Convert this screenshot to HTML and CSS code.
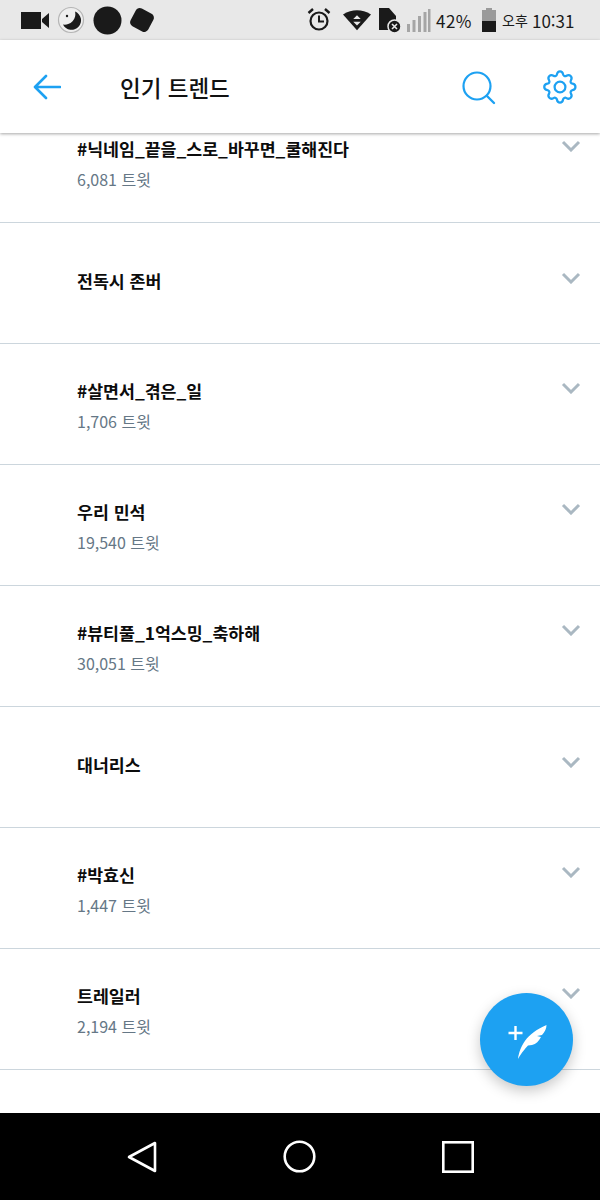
FILE: index.html
```html
<!DOCTYPE html>
<html lang="ko">
<head>
<meta charset="utf-8">
<title>인기 트렌드</title>
<link rel="stylesheet" href="styles.css">
</head>
<body>
<div class="phone">
  <div class="status">
    <div class="status-left">
      <svg class="ic" width="30" height="20" viewBox="0 0 30 20"><path class="dark" d="M1 2h20v17H1z M22 9l7-6v15l-7-6z"/></svg>
      <svg class="ic" width="28" height="28" viewBox="0 0 28 28"><circle cx="14" cy="14" r="12.500" fill="#eee" stroke="#b5b5b5" stroke-width="1.200"/><path class="dark" d="M18 5.500A9.500 9.500 0 1 1 6 18.500 10.500 10.500 0 0 0 18 5.500z"/><circle class="dark" cx="10" cy="10" r="1.200"/></svg>
      <svg class="ic" width="29" height="29" viewBox="0 0 29 29"><circle class="dark" cx="14.500" cy="14.500" r="14"/></svg>
      <svg class="ic" width="30" height="30" viewBox="0 0 30 30"><rect class="dark" x="5" y="5" width="20" height="20" rx="4.500" transform="rotate(28 15 15)"/></svg>
    </div>
    <div class="status-right">
      <svg class="ic alarm" width="24" height="26" viewBox="0 0 24 26"><circle cx="12" cy="14" r="8.500" fill="none" stroke="#1a1a1a" stroke-width="2.200"/><path d="M12 8.500V14.500H17" fill="none" stroke="#1a1a1a" stroke-width="2"/><path d="M1.500 6L6 2M22.500 6L18 2" stroke="#1a1a1a" stroke-width="2.400"/></svg>
      <svg class="ic wifi" width="28" height="24" viewBox="0 0 30 24"><path class="dark" d="M0 6Q15-3 30 6L15 23z"/><path d="M15 7l4 4h-8zM15 18l-4-4h8z" fill="#e8e8e8"/></svg>
      <svg class="ic sim" width="22" height="26" viewBox="0 0 22 26"><path class="dark" d="M0 1h10l7 8v14H0z"/><circle cx="15.500" cy="19.500" r="6.500" class="dark" stroke="#e8e8e8" stroke-width="1.500"/><path d="M13 17l5 5M18 17l-5 5" stroke="#e8e8e8" stroke-width="1.600"/></svg>
      <svg class="ic signal" width="25" height="25" viewBox="0 0 25 25"><path d="M1 16h3v8H1zM6.500 12h3v12h-3zM12 8h3v16h-3zM17.500 4h3v20h-3zM22 1h2.500v23H22z" fill="#a5a5a5"/></svg>
      <span class="pct">42%</span>
      <svg class="ic batt" width="16" height="25" viewBox="0 0 16 25"><path d="M5 0h6v2h4v11H1V2h4z" fill="#9a9a9a"/><path class="dark" d="M1 13h14v11H1z"/></svg>
      <span class="ampm">오후</span>
      <span class="clock">10:31</span>
    </div>
  </div>

  <header class="bar">
    <svg class="back" width="28" height="26" viewBox="0 0 28 26"><path d="M27 13H3M13 2L2 13l11 11" fill="none" stroke="#1da1f2" stroke-width="2.600" stroke-linejoin="round" stroke-linecap="round"/></svg>
    <h1 class="bar-title">인기 트렌드</h1>
    <svg class="search" width="34" height="34" viewBox="0 0 34 34"><circle cx="15" cy="15" r="13.500" fill="none" stroke="#1da1f2" stroke-width="2.200"/><path d="M25 25l7 7" stroke="#1da1f2" stroke-width="2.400" stroke-linecap="round"/></svg>
    <svg class="gear" width="36" height="36" viewBox="0 0 24 24"><path d="M12 1.500c1.300 0 1.800.8 2 1.900.2 1.200 1.300 1.700 2.300 1.100 1-.6 1.900-.7 2.800.2.900.9.800 1.800.2 2.800-.6 1-.1 2.100 1.100 2.300 1.100.2 1.900.8 1.900 2.200s-.8 1.900-1.900 2.100c-1.200.2-1.700 1.300-1.100 2.300.6 1 .7 1.900-.2 2.800-.9.900-1.800.8-2.800.2-1-.6-2.100-.1-2.300 1.100-.2 1.100-.7 1.900-2 1.900s-1.800-.8-2-1.900c-.2-1.200-1.300-1.700-2.300-1.100-1 .6-1.900.7-2.800-.2-.9-.9-.8-1.800-.2-2.800.6-1 .1-2.100-1.100-2.300C2.500 13.900 1.500 13.400 1.500 12s1-2 2.100-2.200c1.200-.2 1.700-1.300 1.100-2.300-.6-1-.7-1.900.2-2.800.9-.9 1.800-.8 2.800-.2 1 .6 2.100.1 2.300-1.100.2-1.100.7-1.900 2-1.900z" fill="none" stroke="#1da1f2" stroke-width="1.500"/><circle cx="12" cy="12" r="3.600" fill="none" stroke="#1da1f2" stroke-width="1.500"/></svg>
  </header>

  <main class="content">
    <ul class="trends">
      <li class="trend">
        <div class="trend-head"><span class="trend-name">#닉네임_끝을_스로_바꾸면_쿨해진다</span><svg class="chev" width="20" height="12" viewBox="0 0 20 12"><path d="M2 2l8 8 8-8"/></svg></div>
        <div class="trend-count">6,081 트윗</div>
      </li>
      <li class="trend">
        <div class="trend-head"><span class="trend-name">전독시 존버</span><svg class="chev" width="20" height="12" viewBox="0 0 20 12"><path d="M2 2l8 8 8-8"/></svg></div>
      </li>
      <li class="trend">
        <div class="trend-head"><span class="trend-name">#살면서_겪은_일</span><svg class="chev" width="20" height="12" viewBox="0 0 20 12"><path d="M2 2l8 8 8-8"/></svg></div>
        <div class="trend-count">1,706 트윗</div>
      </li>
      <li class="trend">
        <div class="trend-head"><span class="trend-name">우리 민석</span><svg class="chev" width="20" height="12" viewBox="0 0 20 12"><path d="M2 2l8 8 8-8"/></svg></div>
        <div class="trend-count">19,540 트윗</div>
      </li>
      <li class="trend">
        <div class="trend-head"><span class="trend-name">#뷰티풀_1억스밍_축하해</span><svg class="chev" width="20" height="12" viewBox="0 0 20 12"><path d="M2 2l8 8 8-8"/></svg></div>
        <div class="trend-count">30,051 트윗</div>
      </li>
      <li class="trend">
        <div class="trend-head"><span class="trend-name">대너리스</span><svg class="chev" width="20" height="12" viewBox="0 0 20 12"><path d="M2 2l8 8 8-8"/></svg></div>
      </li>
      <li class="trend">
        <div class="trend-head"><span class="trend-name">#박효신</span><svg class="chev" width="20" height="12" viewBox="0 0 20 12"><path d="M2 2l8 8 8-8"/></svg></div>
        <div class="trend-count">1,447 트윗</div>
      </li>
      <li class="trend">
        <div class="trend-head"><span class="trend-name">트레일러</span><svg class="chev" width="20" height="12" viewBox="0 0 20 12"><path d="M2 2l8 8 8-8"/></svg></div>
        <div class="trend-count">2,194 트윗</div>
      </li>
    </ul>
    <button class="fab" type="button" aria-label="새 트윗">
      <svg width="52" height="52" viewBox="0 0 52 52"><path d="M14.500 12v14M7.500 19h14" stroke="#fff" stroke-width="2.400"/><path d="M17 45C19 32 25 20 45.500 11c0 3-1.500 7-4.500 10l-5 1 4 1c-2 4-5 7-9 8l-4 .5c-3 3.500-6 6.500-10 13.500z" fill="#fff"/></svg>
    </button>
  </main>

  <nav class="nav">
    <svg width="30" height="32" viewBox="0 0 30 32"><path d="M28 2v28L2 16z" fill="none" stroke="#fff" stroke-width="2.600" stroke-linejoin="round"/></svg>
    <svg width="33" height="33" viewBox="0 0 33 33"><circle cx="16.500" cy="16.500" r="14.800" fill="none" stroke="#fff" stroke-width="2.600"/></svg>
    <svg width="32" height="32" viewBox="0 0 32 32"><rect x="1.300" y="1.300" width="29.400" height="29.400" fill="none" stroke="#fff" stroke-width="2.600"/></svg>
  </nav>
</div>
</body>
</html>
```
FILE: styles.css
```css
* { box-sizing: border-box; }

html, body { margin: 0; padding: 0; }

body {
  font-family: "Noto Sans CJK KR", "Noto Sans", sans-serif;
  background: #fff;
}

.phone {
  width: 600px;
  height: 1200px;
  display: flex;
  flex-direction: column;
  overflow: hidden;
}

.dark { fill: #1a1a1a; }
.ic { display: block; flex: none; }

/* system status bar */
.status {
  height: 40px;
  flex: none;
  background: #e8e8e8;
  display: flex;
  align-items: center;
  justify-content: space-between;
  padding: 0 25px 0 20px;
  color: #1a1a1a;
}

.status-left { display: flex; align-items: center; gap: 8px; }
.status-left .ic:first-child { margin-right: -1px; }
.status-left .ic:last-child { margin-left: -3px; }

.status-right { display: flex; align-items: center; }
.alarm { margin-right: 12px; }
.wifi { margin-right: 8px; }
.sim { margin-right: 5px; }
.signal { margin-right: 5px; }
.pct { font-size: 17px; letter-spacing: .5px; margin-right: 8px; width: 37px; white-space: nowrap; }
.batt { margin-right: 5px; }
.ampm { font-size: 14px; width: 25px; margin-right: 5px; white-space: nowrap; }
.clock { font-size: 17px; width: 43px; white-space: nowrap; }

/* app bar */
.bar {
  height: 93px;
  flex: none;
  background: #fff;
  display: flex;
  align-items: center;
  padding: 0 22px 0 33px;
  box-shadow: 0 1px 3px rgba(0, 0, 0, .35);
  position: relative;
  z-index: 2;
}

.back { margin-right: 59px; }

.bar-title {
  margin: 0 auto 0 0;
  font-size: 22.500px;
  font-weight: 500;
  color: #111;
}

.search { margin-right: 46px; margin-top: 2px; }

/* trend list, scrolled so that the first row sits partly under the bar */
.content {
  flex: 1;
  min-height: 0;
  background: #fff;
  position: relative;
  overflow: hidden;
}

.trends {
  list-style: none;
  margin: -31px 0 0;
  padding: 0;
}

.trend {
  height: 121px;
  border-bottom: 1px solid #ccd6dd;
  padding: 0 19px 4px 77px;
  display: flex;
  flex-direction: column;
  justify-content: center;
}

.trend-head {
  display: flex;
  justify-content: space-between;
  align-items: center;
}

.trend-name {
  font-size: 17.300px;
  font-weight: 700;
  line-height: 30px;
  color: #0c0c0c;
  white-space: nowrap;
}

.chev { margin-top: -7px; }
.chev path {
  fill: none;
  stroke: #aab8c2;
  stroke-width: 3;
}

.trend-count {
  font-size: 16px;
  line-height: 30px;
  color: #657786;
  margin-bottom: -8px;
}

.fab {
  position: absolute;
  left: 480px;
  top: 860px;
  width: 93px;
  height: 93px;
  border: 0;
  border-radius: 50%;
  padding: 0;
  background: #1da1f2;
  box-shadow: 0 5px 14px rgba(0, 0, 0, .22);
  display: flex;
  align-items: center;
  justify-content: center;
}

/* system navigation bar */
.nav {
  height: 87px;
  flex: none;
  background: #000;
  display: flex;
  align-items: center;
  padding: 0 126px 0 127px;
  justify-content: space-between;
}
```
